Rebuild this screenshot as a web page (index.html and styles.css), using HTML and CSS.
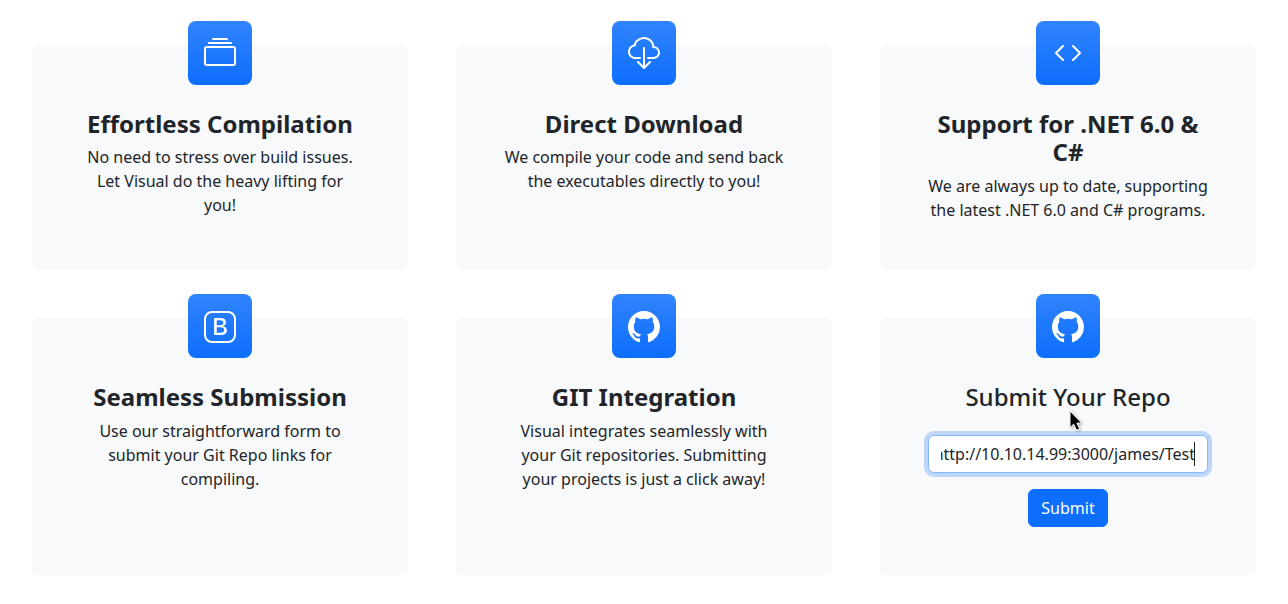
FILE: index.html
```html
<!DOCTYPE html>
<html lang="en">
<head>
<meta charset="utf-8">
<title>Visual</title>
<link rel="stylesheet" href="styles.css">
</head>
<body>
<main class="grid">
  <section class="card">
    <div class="feature"><svg viewBox="0 0 16 16"><path d="M2.5 3.5a.5.5 0 0 1 0-1h11a.5.5 0 0 1 0 1h-11zm2-2a.5.5 0 0 1 0-1h7a.5.5 0 0 1 0 1h-7zM0 13a1.5 1.500 0 0 0 1.500 1.500h13A1.500 1.500 0 0 0 16 13V6a1.500 1.500 0 0 0-1.500-1.500h-13A1.500 1.500 0 0 0 0 6v7zm1.500.5A.5.5 0 0 1 1 13V6a.5.5 0 0 1 .5-.5h13a.5.5 0 0 1 .5.5v7a.5.5 0 0 1-.5.5h-13z"/></svg></div>
    <h2>Effortless Compilation</h2>
    <p>No need to stress over build issues. Let Visual do the heavy lifting for you!</p>
  </section>
  <section class="card">
    <div class="feature"><svg viewBox="0 0 16 16"><path d="M4.406 1.342A5.530 5.530 0 0 1 8 0c2.690 0 4.923 2 5.166 4.579C14.758 4.804 16 6.137 16 7.773 16 9.569 14.502 11 12.687 11H10a.5.5 0 0 1 0-1h2.688C13.979 10 15 8.988 15 7.773c0-1.216-1.020-2.228-2.313-2.228h-.5v-.5C12.188 2.825 10.328 1 8 1a4.530 4.530 0 0 0-2.941 1.100c-.757.652-1.153 1.438-1.153 2.055v.448l-.445.049C2.064 4.805 1 5.952 1 7.318 1 8.785 2.230 10 3.781 10H6a.5.5 0 0 1 0 1H3.781C1.708 11 0 9.366 0 7.318c0-1.763 1.266-3.223 2.942-3.593.143-.863.698-1.723 1.464-2.383z"/><path d="M7.646 15.854a.5.5 0 0 0 .708 0l3-3a.5.5 0 0 0-.708-.708L8.500 14.293V5.500a.5.5 0 0 0-1 0v8.793l-2.146-2.147a.5.5 0 0 0-.708.708l3 3z"/></svg></div>
    <h2>Direct Download</h2>
    <p>We compile your code and send back the executables directly to you!</p>
  </section>
  <section class="card">
    <div class="feature"><svg viewBox="0 0 16 16"><path d="M5.854 4.854a.5.5 0 1 0-.708-.708l-3.500 3.500a.5.5 0 0 0 0 .708l3.500 3.500a.5.5 0 0 0 .708-.708L2.707 8l3.147-3.146zm4.292 0a.5.5 0 0 1 .708-.708l3.500 3.500a.5.5 0 0 1 0 .708l-3.500 3.500a.5.5 0 0 1-.708-.708L13.293 8l-3.147-3.146z"/></svg></div>
    <h2>Support for .NET 6.0 &amp; C#</h2>
    <p>We are always up to date, supporting the latest .NET 6.0 and C# programs.</p>
  </section>
  <section class="card lower">
    <div class="feature"><svg viewBox="0 0 16 16"><path fill-rule="evenodd" d="M5.062 12h3.475c1.804 0 2.888-.908 2.888-2.396 0-1.102-.761-1.916-1.904-2.034v-.1c.832-.14 1.482-.93 1.482-1.816 0-1.300-.955-2.110-2.542-2.110H5.062V12zm1.313-4.875V4.658h1.780c.973 0 1.542.457 1.542 1.237 0 .802-.604 1.230-1.764 1.230H6.375zm0 3.762h1.898c1.184 0 1.810-.48 1.810-1.377 0-.885-.65-1.348-1.886-1.348H6.375v2.725z"/><path d="M0 4a4 4 0 0 1 4-4h8a4 4 0 0 1 4 4v8a4 4 0 0 1-4 4H4a4 4 0 0 1-4-4V4zm4-3a3 3 0 0 0-3 3v8a3 3 0 0 0 3 3h8a3 3 0 0 0 3-3V4a3 3 0 0 0-3-3H4z"/></svg></div>
    <h2>Seamless Submission</h2>
    <p>Use our straightforward form to submit your Git Repo links for compiling.</p>
  </section>
  <section class="card lower">
    <div class="feature"><svg viewBox="0 0 16 16"><path d="M8 0C3.580 0 0 3.580 0 8c0 3.540 2.290 6.530 5.470 7.590.4.070.55-.17.55-.38 0-.19-.01-.82-.01-1.490-2.010.37-2.530-.49-2.690-.94-.09-.23-.48-.94-.82-1.130-.28-.15-.68-.52-.01-.53.63-.01 1.080.58 1.230.82.72 1.210 1.870.87 2.330.66.07-.52.28-.87.51-1.070-1.780-.2-3.640-.89-3.640-3.950 0-.87.31-1.590.82-2.150-.08-.2-.36-1.020.08-2.120 0 0 .67-.21 2.200.82.64-.18 1.320-.27 2-.27.68 0 1.360.09 2 .27 1.530-1.040 2.200-.82 2.200-.82.44 1.100.16 1.920.08 2.120.51.56.82 1.270.82 2.150 0 3.070-1.870 3.750-3.650 3.950.29.25.54.73.54 1.480 0 1.070-.01 1.930-.01 2.200 0 .21.15.46.55.38A8.012 8.012 0 0 0 16 8c0-4.420-3.580-8-8-8z"/></svg></div>
    <h2>GIT Integration</h2>
    <p>Visual integrates seamlessly with your Git repositories. Submitting your projects is just a click away!</p>
  </section>
  <section class="card lower">
    <div class="feature"><svg viewBox="0 0 16 16"><path d="M8 0C3.580 0 0 3.580 0 8c0 3.540 2.290 6.530 5.470 7.590.4.070.55-.17.55-.38 0-.19-.01-.82-.01-1.490-2.010.37-2.530-.49-2.690-.94-.09-.23-.48-.94-.82-1.130-.28-.15-.68-.52-.01-.53.63-.01 1.080.58 1.230.82.72 1.210 1.870.87 2.330.66.07-.52.28-.87.51-1.070-1.780-.2-3.640-.89-3.640-3.950 0-.87.31-1.590.82-2.150-.08-.2-.36-1.020.08-2.120 0 0 .67-.21 2.200.82.64-.18 1.320-.27 2-.27.68 0 1.360.09 2 .27 1.530-1.040 2.200-.82 2.200-.82.44 1.100.16 1.920.08 2.120.51.56.82 1.270.82 2.150 0 3.070-1.870 3.750-3.650 3.950.29.25.54.73.54 1.480 0 1.070-.01 1.930-.01 2.200 0 .21.15.46.55.38A8.012 8.012 0 0 0 16 8c0-4.420-3.580-8-8-8z"/></svg></div>
    <h2 class="light">Submit Your Repo</h2>
    <form class="form">
      <div class="field"><div class="clip"><span class="value">http://10.10.14.99:3000/james/Test</span></div></div>
      <button class="submit" type="button">Submit</button>
    </form>
    <svg class="cursor" viewBox="0 0 14 22"><path d="M1 1v16.500l3.700-3.300 2.800 6 3.200-1.400-2.800-5.700h4.800z"/></svg>
  </section>
</main>
</body>
</html>
```
FILE: styles.css
```css
* { box-sizing: border-box; }
body { margin: 0; background: #fff; color: #212529; font: 16px/24px "Noto Sans", sans-serif; }
.grid { display: grid; grid-template-columns: repeat(3, 376px); grid-template-rows: 225px 257px; gap: 48px; padding: 45px 32px 0; }
.card { position: relative; background: #f8f9fa; border-radius: 6px; padding: 0 48px; text-align: center; }
.feature { display: flex; align-items: center; justify-content: center; width: 64px; height: 64px; margin: -24px auto 25px; border-radius: 8px; background: #0d6efd linear-gradient(180deg, rgba(255,255,255,.15), rgba(255,255,255,0)); }
.feature svg { width: 32px; height: 32px; fill: #fff; }
.lower .feature { padding-top: 2px; }
h2 { margin: 0 0 7px; font-size: 24px; line-height: 28.4px; font-weight: 700; }
.lower h2 { margin-bottom: 7.6px; }
.light { font-weight: 500; }
p { margin: 0; }
.form { display: flex; flex-direction: column; align-items: center; gap: 16px; padding-top: 16px; }
.field { width: 280px; height: 38px; padding: 6px 12px; background: #fff; border: 1px solid #86b7fe; border-radius: 6px; box-shadow: 0 0 0 4px rgba(13,110,253,.25); }
.clip { display: flex; justify-content: flex-end; overflow: hidden; }
.value { white-space: nowrap; box-shadow: inset -1px 0 #212529; }
.submit { height: 38px; padding: 6px 12px; border: 1px solid #0d6efd; border-radius: 6px; background: #0d6efd; color: #fff; font: inherit; }
.cursor { position: absolute; left: 189px; top: 92px; width: 14px; height: 22px; fill: #000; stroke: #fff; stroke-width: 1; filter: drop-shadow(1px 1px 1px rgba(0,0,0,.3)); }
```
